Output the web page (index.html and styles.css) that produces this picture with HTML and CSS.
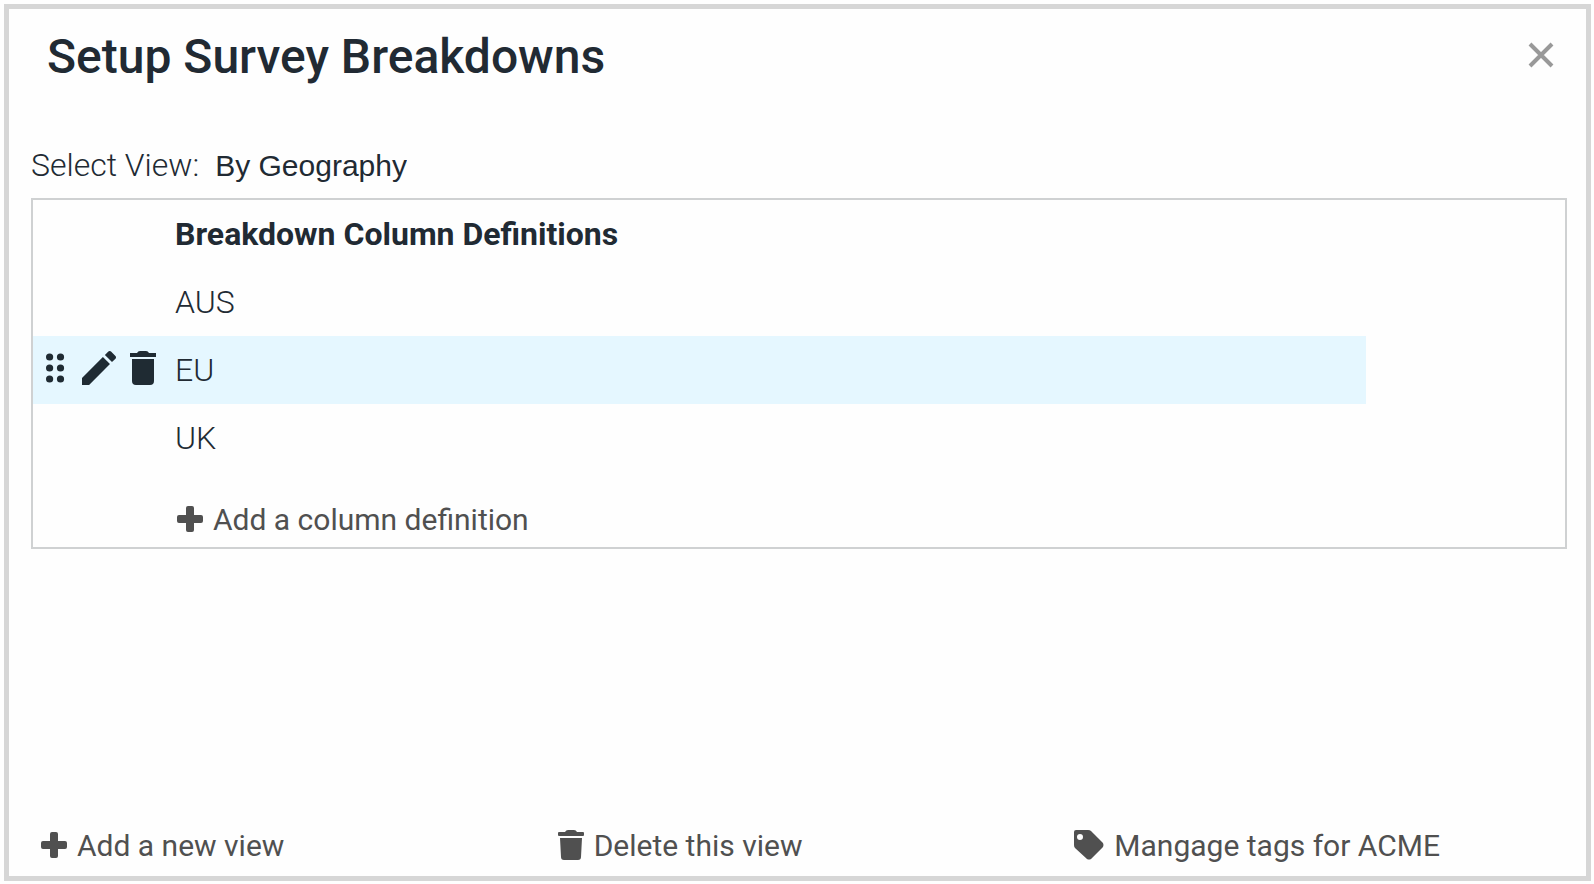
FILE: index.html
```html
<!DOCTYPE html>
<html lang="en">
<head>
    <meta charset="UTF-8">
    <meta name="viewport" content="width=device-width, initial-scale=1.0">
    <title>Setup Survey Breakdowns</title>
    <link rel="stylesheet" href="styles.css">
</head>
<body>
    <main class="dialog">
        <header class="header">
            <h1>Setup Survey Breakdowns</h1>
            <button type="button" class="close" aria-label="Close">
                <svg width="26" height="26" viewBox="0 0 26 26"><path d="M2 2L24 24M24 2L2 24" fill="none" stroke="currentColor" stroke-width="4"/></svg>
            </button>
        </header>

        <div class="view">
            <label for="view">Select View:</label>
            <select id="view">
                <option>By Geography</option>
            </select>
        </div>

        <section class="panel">
            <table class="columns">
                <thead>
                    <tr><td class="tools"></td><th>Breakdown Column Definitions</th></tr>
                </thead>
                <tbody>
                    <tr><td class="tools"></td><td>AUS</td></tr>
                    <tr class="active">
                        <td class="tools">
                            <div class="tools-row">
                                <button type="button" aria-label="Move">
                                    <svg width="22" height="30" viewBox="0 0 22 30"><circle cx="3.600" cy="4" r="3.600"/><circle cx="14.500" cy="4" r="3.600"/><circle cx="3.600" cy="15" r="3.600"/><circle cx="14.500" cy="15" r="3.600"/><circle cx="3.600" cy="26" r="3.600"/><circle cx="14.500" cy="26" r="3.600"/></svg>
                                </button>
                                <button type="button" aria-label="Edit">
                                    <svg width="34" height="34" viewBox="3 3 18 18"><path d="M3 17.250V21h3.750L17.810 9.940l-3.750-3.750L3 17.250zM20.710 7.040c.39-.39.39-1.020 0-1.410l-2.340-2.340c-.39-.39-1.020-.39-1.410 0l-1.830 1.830 3.750 3.750 1.830-1.830z"/></svg>
                                </button>
                                <button type="button" aria-label="Delete">
                                    <svg width="26" height="34" viewBox="0 0 26 34"><path d="M0 2H7Q8 0 10 0H16Q18 0 19 2H26V6H0zM2 8H24V30Q24 34 20 34H6Q2 34 2 30z"/></svg>
                                </button>
                            </div>
                        </td>
                        <td>EU</td>
                    </tr>
                    <tr><td class="tools"></td><td>UK</td></tr>
                </tbody>
            </table>
            <button type="button" class="action add-column">
                <svg width="26" height="26" viewBox="0 0 26 26"><path d="M11 0h4q2 0 2 2v7h7q2 0 2 2v4q0 2-2 2h-7v7q0 2-2 2h-4q-2 0-2-2v-7H2q-2 0-2-2v-4q0-2 2-2h7V2q0-2 2-2z"/></svg>
                Add a column definition
            </button>
        </section>

        <footer class="footer">
            <button type="button" class="action">
                <svg width="26" height="26" viewBox="0 0 26 26"><path d="M11 0h4q2 0 2 2v7h7q2 0 2 2v4q0 2-2 2h-7v7q0 2-2 2h-4q-2 0-2-2v-7H2q-2 0-2-2v-4q0-2 2-2h7V2q0-2 2-2z"/></svg>
                Add a new view
            </button>
            <button type="button" class="action">
                <svg width="26" height="30" viewBox="0 0 26 30"><path d="M1 2H7Q8 0 10 0H16Q18 0 19 2H25Q26 2 26 3V5Q26 6 25 6H1Q0 6 0 5V3Q0 2 1 2zM2 8H24L23 27Q23 30 20 30H6Q3 30 3 27z"/></svg>
                Delete this view
            </button>
            <button type="button" class="action">
                <svg width="30" height="30" viewBox="0 0 30 30"><path fill-rule="evenodd" d="M2 0H14Q16 0 17 1L29 13Q30 15 29 17L17 29Q15 30 13 29L1 18Q0 17 0 15V2Q0 0 2 0zM6 4A3 3 0 1 0 6 10A3 3 0 1 0 6 4z"/></svg>
                Mangage tags for ACME
            </button>
        </footer>
    </main>
</body>
</html>
```

FILE: styles.css
```css
* {
    box-sizing: border-box;
}
body {
    margin: 0;
    padding: 4px 3px 3px 4px;
    height: 100vh;
    background: #fefefe;
    font-family: Roboto, sans-serif;
    font-size: 32px;
    font-weight: 300;
    color: #212a33;
}
button {
    display: flex;
    align-items: center;
    padding: 0;
    border: none;
    background: none;
    color: inherit;
    font: inherit;
    cursor: pointer;
}
svg {
    fill: currentColor;
    flex: none;
}
.dialog {
    display: flex;
    flex-direction: column;
    min-height: 100%;
    padding: 20px 19px 12px 22px;
    border: 5px solid #d6d6d6;
}
.header {
    display: flex;
    justify-content: space-between;
    align-items: center;
    padding: 0 13px 0 16px;
    margin-bottom: 52px;
}
h1 {
    margin: 0;
    font-size: 48px;
    font-weight: 500;
    line-height: 56px;
}
.close {
    padding-bottom: 4px;
    color: #999;
}
.view {
    display: flex;
    align-items: center;
    gap: 16px;
    line-height: 56px;
    margin-bottom: 5px;
}
select {
    appearance: none;
    padding: 0;
    border: none;
    background: none;
    color: inherit;
    font-family: "Liberation Sans", Arial, sans-serif;
    font-size: 30px;
}
.panel {
    padding-bottom: 9px;
    border: 2px solid #cfd1d2;
}
.columns {
    width: 87%;
    border-collapse: collapse;
}
.columns tr {
    height: 68px;
}
.columns th,
.columns td {
    padding: 0;
    text-align: left;
}
.columns th {
    font-weight: 700;
}
.columns .tools {
    width: 142px;
}
.tools-row {
    display: flex;
    align-items: center;
    gap: 14px;
    padding: 0 0 4px 13px;
    color: #1f2b33;
}
.active {
    background: #e5f7ff;
}
.action {
    gap: 10px;
    color: #505050;
    font-size: 30px;
    font-weight: 400;
    line-height: 36px;
}
.action svg {
    margin-bottom: 2px;
}
.add-column {
    margin: 30px 0 0 144px;
}
.footer {
    display: grid;
    grid-template-columns: repeat(3, 1fr);
    column-gap: 24px;
    margin-top: auto;
    padding-left: 10px;
}
```
